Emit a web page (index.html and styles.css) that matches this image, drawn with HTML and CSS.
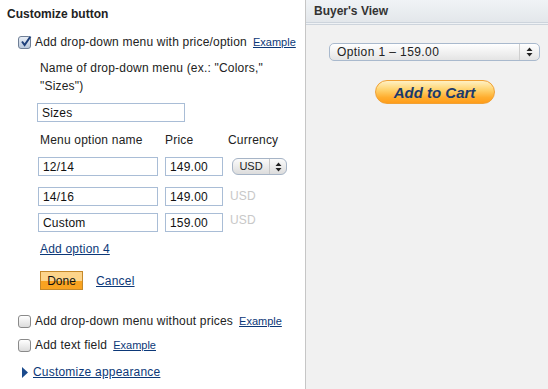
FILE: index.html
```html
<!DOCTYPE html>
<html lang="en">
<head>
    <meta charset="UTF-8">
    <title>Customize button</title>
    <link rel="stylesheet" href="styles.css">
</head>
<body>
<div class="page">

    <div class="editor">
        <h2 class="title">Customize button</h2>

        <div class="option first-option">
            <span class="check checked">
                <svg width="13" height="13" viewBox="0 0 13 13"><path d="M3 6.5 L5.6 10 L11.5 1.5" fill="none" stroke="#1d3f7a" stroke-width="2"/></svg>
            </span>
            <span class="option-text">Add drop-down menu with price/option</span>
            <a href="#" class="small-link">Example</a>
        </div>

        <div class="dropdown-fields">
            <p class="hint">Name of drop-down menu (ex.: "Colors,"<br>"Sizes")</p>
            <input type="text" class="field menu-name" value="Sizes">

            <div class="opt-row heads">
                <span class="col-name">Menu option name</span>
                <span class="col-price">Price</span>
                <span class="col-cur">Currency</span>
            </div>
            <div class="opt-row row-1">
                <span class="col-name"><input type="text" class="field name-field" value="12/14"></span>
                <span class="col-price"><input type="text" class="field price-field" value="149.00"></span>
                <span class="col-cur">
                    <span class="usd-select">
                        <span class="usd-value">USD</span>
                        <span class="usd-arrows"><svg width="7" height="10" viewBox="0 0 7 10"><path d="M3.5 0.5 L6.5 4 L0.5 4 Z M3.5 9.5 L6.5 6 L0.5 6 Z" fill="#222"/></svg></span>
                    </span>
                </span>
            </div>
            <div class="opt-row row-2">
                <span class="col-name"><input type="text" class="field name-field" value="14/16"></span>
                <span class="col-price"><input type="text" class="field price-field" value="149.00"></span>
                <span class="col-cur muted">USD</span>
            </div>
            <div class="opt-row row-3">
                <span class="col-name"><input type="text" class="field name-field" value="Custom"></span>
                <span class="col-price"><input type="text" class="field price-field" value="159.00"></span>
                <span class="col-cur muted">USD</span>
            </div>

            <a href="#" class="link add-link">Add option 4</a>

            <div class="actions">
                <button class="done-btn">Done</button>
                <a href="#" class="link">Cancel</a>
            </div>
        </div>

        <div class="option second-option">
            <span class="check"></span>
            <span class="option-text">Add drop-down menu without prices</span>
            <a href="#" class="small-link">Example</a>
        </div>
        <div class="option third-option">
            <span class="check"></span>
            <span class="option-text">Add text field</span>
            <a href="#" class="small-link">Example</a>
        </div>

        <div class="appearance">
            <svg width="6" height="11" viewBox="0 0 6 11"><path d="M0 0 L6 5.5 L0 11 Z" fill="#1b4a8c"/></svg>
            <a href="#" class="link">Customize appearance</a>
        </div>
    </div>

    <div class="preview">
        <div class="preview-head">Buyer's View</div>
        <div class="preview-body">
            <div class="buy-select">
                <span class="buy-value">Option 1 &ndash; 159.00</span>
                <span class="buy-arrows"><svg width="7" height="10" viewBox="0 0 7 10"><path d="M3.5 0.5 L6.5 4 L0.5 4 Z M3.5 9.5 L6.5 6 L0.5 6 Z" fill="#222"/></svg></span>
            </div>
            <button class="cart-btn">Add to Cart</button>
        </div>
    </div>

</div>
</body>
</html>
```

FILE: styles.css
```css
body {
    margin: 0;
    padding: 0;
    font-family: "Liberation Sans", Arial, sans-serif;
    font-size: 12px;
    color: #222;
    background-color: #fff;
}
.page {
    display: flex;
    height: 389px;
    overflow: hidden;
}
.editor {
    width: 305px;
    flex-shrink: 0;
}
.title {
    margin: 6px 0 0 7px;
    font-size: 12px;
    line-height: 16px;
    font-weight: bold;
    color: #222;
}
.option {
    display: flex;
    align-items: center;
    height: 16px;
    margin-left: 18px;
    letter-spacing: 0.2px;
}
.first-option {
    margin-top: 12px;
}
.second-option {
    margin-top: 23px;
}
.third-option {
    margin-top: 8px;
}
.check {
    width: 11px;
    height: 11px;
    border: 1px solid #8a8a8a;
    border-radius: 3px;
    background: linear-gradient(#ffffff, #dcdcdc);
    margin-right: 4px;
    position: relative;
    flex-shrink: 0;
}
.check.checked {
    border-color: #6f7f96;
    background: linear-gradient(#e8eef6, #b9c8dc);
}
.check svg {
    position: absolute;
    left: 0;
    top: -2px;
}
.option-text {
    margin-right: 6px;
}
.small-link {
    font-size: 11px;
    color: #0c3878;
    letter-spacing: 0;
}
.link {
    color: #0c3878;
    letter-spacing: 0.2px;
}
.dropdown-fields {
    padding-left: 38px;
}
.hint {
    margin: 9px 0 0 2px;
    line-height: 18px;
    letter-spacing: 0.2px;
}
.field {
    box-sizing: border-box;
    height: 19px;
    border: 1px solid #a9bdd6;
    padding: 0 4px;
    font-family: "Liberation Sans", Arial, sans-serif;
    font-size: 12px;
    color: #111;
    letter-spacing: 0.2px;
    outline: none;
}
.menu-name {
    display: block;
    width: 148px;
    margin: 8px 0 0 -1px;
}
.opt-row {
    display: flex;
    align-items: center;
}
.heads {
    margin-top: 10px;
    height: 16px;
    letter-spacing: 0.2px;
}
.heads .col-name {
    padding-left: 2px;
    box-sizing: border-box;
}
.heads .col-cur {
    margin-left: -4px;
}
.row-1 {
    margin-top: 9px;
}
.row-2 {
    margin-top: 11px;
}
.row-3 {
    margin-top: 7px;
}
.col-name {
    width: 127px;
    display: flex;
}
.col-price {
    width: 67px;
    display: flex;
}
.name-field {
    width: 120px;
}
.price-field {
    width: 58px;
}
.muted {
    color: #c8c8c8;
    margin-left: -2px;
    align-self: flex-start;
    letter-spacing: 0.2px;
}
.row-2 .muted {
    padding-top: 2px;
}
.usd-select {
    display: flex;
    align-items: center;
    box-sizing: border-box;
    width: 55px;
    height: 17px;
    border: 1px solid #a6b4c6;
    border-radius: 6px;
    background: linear-gradient(#fbfbfb, #dcdcdc);
    font-size: 11px;
}
.usd-value {
    flex: 1;
    text-align: center;
    border-right: 1px solid #c8c8c8;
    line-height: 15px;
}
.usd-arrows {
    width: 16px;
    display: flex;
    justify-content: center;
}
.add-link {
    display: block;
    width: max-content;
    margin: 9px 0 0 2px;
    line-height: 16px;
}
.actions {
    display: flex;
    align-items: center;
    margin: 14px 0 0 2px;
}
.done-btn {
    width: 43px;
    height: 19px;
    padding: 0;
    border: 1px solid #c5882a;
    background: linear-gradient(#fdd48a 50%, #f9a321 50%);
    font-family: "Liberation Sans", Arial, sans-serif;
    font-size: 12px;
    color: #111;
    margin-right: 13px;
}
.appearance {
    display: flex;
    align-items: center;
    margin: 11px 0 0 22px;
    height: 16px;
}
.appearance svg {
    margin-right: 5px;
}
.preview {
    flex: 1;
    background-color: #f1f1f1;
    border-left: 1px solid #c6c6c6;
}
.preview-head {
    height: 22px;
    line-height: 22px;
    padding-left: 8px;
    font-weight: bold;
    color: #333;
    background: linear-gradient(#f0f3f6, #e3e7eb);
    border-bottom: 3px double #cdd4dc;
}
.preview-body {
    width: 211px;
    margin: 18px 0 0 23px;
    text-align: center;
}
.buy-select {
    display: flex;
    align-items: center;
    box-sizing: border-box;
    height: 18px;
    border: 1px solid #a9b9cd;
    border-radius: 5px;
    background: linear-gradient(#ffffff, #e4e4e4);
    text-align: left;
}
.buy-value {
    flex: 1;
    padding-left: 7px;
    letter-spacing: 0.4px;
    line-height: 16px;
    border-right: 1px solid #cfcfcf;
}
.buy-arrows {
    width: 19px;
    display: flex;
    justify-content: center;
}
.cart-btn {
    margin-top: 19px;
    width: 120px;
    height: 24px;
    border: 1px solid #f0a136;
    border-radius: 12px;
    background: linear-gradient(#fff1c4 0%, #ffd36e 40%, #ffad2e 75%, #ff9d1a 100%);
    font-family: "Liberation Sans", Arial, sans-serif;
    font-size: 15px;
    font-weight: bold;
    font-style: italic;
    color: #1b3a6c;
    padding: 0;
}
```
